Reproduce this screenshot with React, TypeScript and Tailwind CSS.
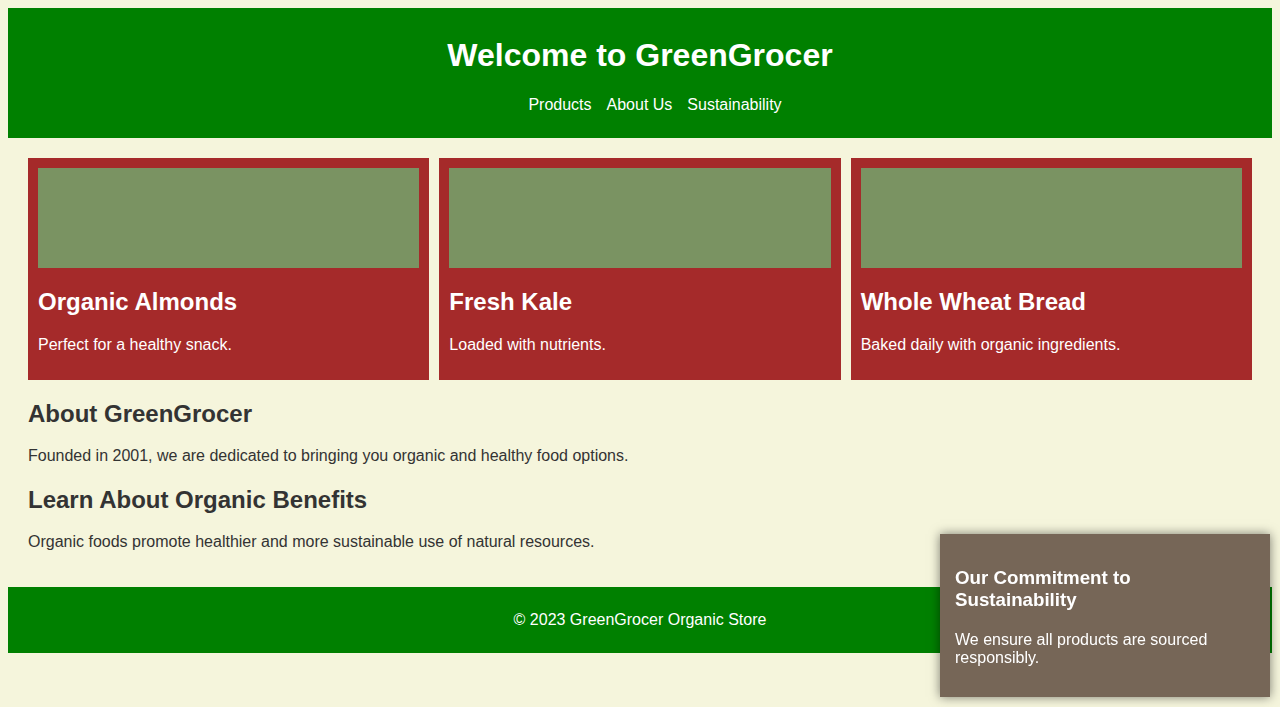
const products = [
  { name: "Organic Almonds", blurb: "Perfect for a healthy snack." },
  { name: "Fresh Kale", blurb: "Loaded with nutrients." },
  { name: "Whole Wheat Bread", blurb: "Baked daily with organic ingredients." },
];

const navLinks = ["Products", "About Us", "Sustainability"];

const App = () => (
  <div className="min-h-[707px] bg-[#f5f5dc] p-2 font-['Liberation_Sans',Arial,sans-serif] text-[#333]">
    <header className="bg-[#008000] pt-[29px] pb-[24px] text-center text-white">
      <h1 className="text-[32px] font-bold leading-[37px] mb-[22px]">Welcome to GreenGrocer</h1>
      <nav className="flex justify-center gap-[15px] pl-[30px] text-base leading-[18px]">
        {navLinks.map((link) => (
          <a key={link} href="#" className="text-white">
            {link}
          </a>
        ))}
      </nav>
    </header>

    <main className="p-5">
      <div className="grid grid-cols-3 gap-[10px]">
        {products.map((p) => (
          <ProductCard key={p.name} {...p} />
        ))}
      </div>

      <section>
        <h2 className="text-2xl font-bold leading-[27.6px] mt-[19.92px]">About GreenGrocer</h2>
        <p className="text-base leading-[18.4px] mt-[19.92px]">
          Founded in 2001, we are dedicated to bringing you organic and healthy food options.
        </p>
      </section>
      <section>
        <h2 className="text-2xl font-bold leading-[27.6px] mt-[19.92px]">Learn About Organic Benefits</h2>
        <p className="text-base leading-[18.4px] mt-[19.92px] mb-4">
          Organic foods promote healthier and more sustainable use of natural resources.
        </p>
      </section>
    </main>

    <footer className="bg-[#008000] py-6 text-center text-base leading-[18px] text-white">
      © 2023 GreenGrocer Organic Store
    </footer>

    <SustainabilityBox />
  </div>
);

const ProductCard = ({ name, blurb }: { name: string; blurb: string }) => (
  <div className="bg-[#a52a2a] p-[10px] text-white">
    <div className="h-[100px] bg-[#7a9362]" />
    <h2 className="text-2xl font-bold leading-[27.6px] mt-[19.92px]">{name}</h2>
    <p className="text-base leading-[18.4px] mt-[20px] mb-[15.92px]">{blurb}</p>
  </div>
);

const SustainabilityBox = () => (
  <aside className="fixed right-[10px] bottom-[10px] w-[330px] bg-[#766657] p-[15px] text-white shadow-[0_0_10px_rgba(0,0,0,0.5)]">
    <h3 className="text-[18.72px] font-bold leading-[22px] mt-[18px]">Our Commitment to Sustainability</h3>
    <p className="text-base leading-[18px] mt-[20px] mb-[15px]">We ensure all products are sourced responsibly.</p>
  </aside>
);

export default App;
